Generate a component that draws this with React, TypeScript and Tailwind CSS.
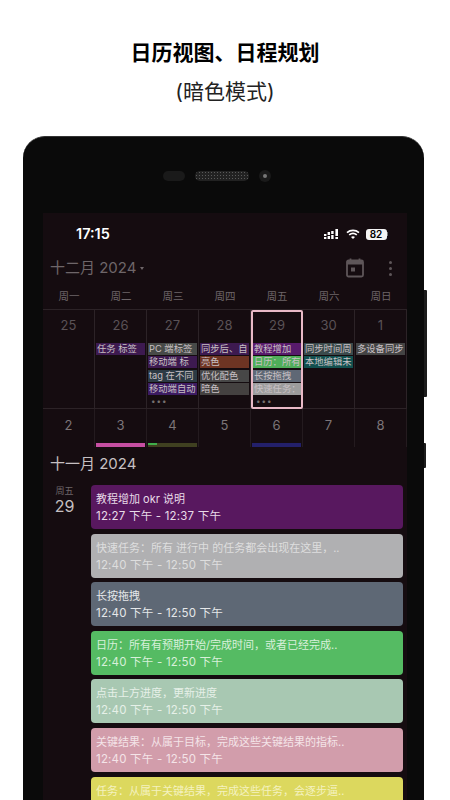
const font = { fontFamily: '"Inter", "Noto Sans CJK SC", sans-serif' };

const weekdays = ['周一', '周二', '周三', '周四', '周五', '周六', '周日'];

type Chip = { text: string; bg: string; color?: string };

const firstWeek: { day: string; chips: Chip[]; more?: boolean; today?: boolean }[] = [
  { day: '25', chips: [] },
  { day: '26', chips: [{ text: '任务 标签', bg: 'bg-[#3d1a50]' }] },
  {
    day: '27',
    more: true,
    chips: [
      { text: 'PC 端标签', bg: 'bg-[#474a48]' },
      { text: '移动端 标', bg: 'bg-[#3d1a50]' },
      { text: 'tag 在不同', bg: 'bg-[#2c3a44]' },
      { text: '移动端自动', bg: 'bg-[#3c1b62]' },
    ],
  },
  {
    day: '28',
    chips: [
      { text: '同步后、自', bg: 'bg-[#3d1a50]' },
      { text: '亮色', bg: 'bg-[#6e3423]' },
      { text: '优化配色', bg: 'bg-[#474747]' },
      { text: '暗色', bg: 'bg-[#444140]' },
    ],
  },
  {
    day: '29',
    more: true,
    today: true,
    chips: [
      { text: '教程增加', bg: 'bg-[#581a6c]' },
      { text: '日历：所有', bg: 'bg-[#4fae5a]' },
      { text: '长按拖拽', bg: 'bg-[#5f6875]' },
      { text: '快速任务：', bg: 'bg-[#9c9c9c]' },
    ],
  },
  {
    day: '30',
    chips: [
      { text: '同步时间周', bg: 'bg-[#3a4a4c]' },
      { text: '本地编辑未', bg: 'bg-[#12504f]' },
    ],
  },
  { day: '1', chips: [{ text: '多设备同步', bg: 'bg-[#444444]' }] },
];

const secondWeek: { day: string; bar?: string; accent?: string }[] = [
  { day: '2' },
  { day: '3', bar: 'bg-[#c64fa2]' },
  { day: '4', bar: 'bg-[#3f4020]', accent: 'bg-[#3fae4a]' },
  { day: '5' },
  { day: '6', bar: 'bg-[#23206a]' },
  { day: '7' },
  { day: '8' },
];

const events = [
  { title: '教程增加 okr 说明', time: '12:27 下午 - 12:37 下午', bg: 'bg-[#58185f]', color: 'text-[#e8dce8]' },
  { title: '快速任务：所有 进行中 的任务都会出现在这里，..', time: '12:40 下午 - 12:50 下午', bg: 'bg-[#b0b0b2]', color: 'text-[#dedede]' },
  { title: '长按拖拽', time: '12:40 下午 - 12:50 下午', bg: 'bg-[#5e6875]', color: 'text-[#e6e8ea]' },
  { title: '日历：所有有预期开始/完成时间，或者已经完成..', time: '12:40 下午 - 12:50 下午', bg: 'bg-[#55bb63]', color: 'text-[#d8f0da]' },
  { title: '点击上方进度，更新进度', time: '12:40 下午 - 12:50 下午', bg: 'bg-[#a8c8b2]', color: 'text-[#e6f0e8]' },
  { title: '关键结果：从属于目标，完成这些关键结果的指标..', time: '12:40 下午 - 12:50 下午', bg: 'bg-[#d29dab]', color: 'text-[#f4e4e8]' },
  { title: '任务：从属于关键结果，完成这些任务，会逐步逼..', time: '12:40 下午 - 12:50 下午', bg: 'bg-[#dcd85e]', color: 'text-[#f4f2c0]' },
];

function SignalIcon() {
  return (
    <svg width="16" height="10" viewBox="0 0 16 10" fill="#fff">
      <rect x="0" y="5" width="2.4" height="2" />
      <rect x="0" y="8" width="2.4" height="2" />
      <rect x="3.6" y="3" width="2.4" height="3" />
      <rect x="3.6" y="7" width="2.4" height="3" />
      <rect x="7.2" y="2" width="2.4" height="3" />
      <rect x="7.2" y="6" width="2.4" height="4" />
      <rect x="11.4" y="0" width="2.6" height="7" />
      <rect x="11.4" y="8" width="2.6" height="2" />
    </svg>
  );
}

function WifiIcon() {
  return (
    <svg width="14" height="10" viewBox="0 0 14 10" fill="none" stroke="#fff" strokeWidth="1.7">
      <path d="M1 3.6C4.4.6 9.6.6 13 3.6" />
      <path d="M3.2 5.9c2.2-1.9 5.4-1.9 7.6 0" />
      <path d="M7 10 5 7.9c1.1-1 2.9-1 4 0Z" fill="#fff" stroke="none" />
    </svg>
  );
}

function CalendarIcon() {
  return (
    <svg width="18" height="20" viewBox="0 0 18 20" fill="none">
      <path d="M4.5 0.5v3M13.5 0.5v3" stroke="#5e5659" strokeWidth="1.8" />
      <rect x="1" y="2.5" width="16" height="16" rx="1.5" stroke="#5e5659" strokeWidth="1.8" />
      <rect x="1" y="2.5" width="16" height="4" fill="#5e5659" />
      <rect x="5" y="9.5" width="4" height="4" fill="#5e5659" />
    </svg>
  );
}

export default function App() {
  return (
    <div className="w-[450px] h-[800px] overflow-hidden bg-white flex flex-col items-start" style={font}>
      <div className="w-full pt-[38px] flex flex-col items-center text-black">
        <h1 className="text-[21px] leading-[30px] font-bold">日历视图、日程规划</h1>
        <p className="mt-[9px] text-[21px] leading-[30px] text-[#222]">(暗色模式)</p>
      </div>

      <div className="relative ml-[23px] mt-[29px] w-[401px] h-[700px] shrink-0 rounded-t-[22px] bg-[#0a0a0a] border-t border-[#333] pl-[20px] pr-[17px]">
        <div className="absolute right-[-3px] top-[153px] w-[3px] h-[107px] bg-[#1c1c1c] rounded-r-[1px]" />
        <div className="absolute right-[-2px] top-[306px] w-[2px] h-[25px] bg-[#1c1c1c] rounded-r-[1px]" />

        <div className="h-[76px] flex items-start justify-center pt-[34px] pr-[17px]">
          <div className="w-[22px] h-[10px] rounded-full bg-[#1a1a1a]" />
          <div
            className="ml-[10px] w-[54px] h-[10px] rounded-full bg-[#222] bg-[radial-gradient(#5a5a5a_0.7px,transparent_0.8px)] bg-[length:3px_3px]"
          />
          <div className="ml-[10px] w-[12px] h-[12px] -mt-[1px] rounded-full bg-[#1a1a1a] flex items-center justify-center">
            <div className="w-[4px] h-[4px] rounded-full bg-[#777]" />
          </div>
        </div>

        <div className="w-[364px] h-[625px] bg-[#150c10] overflow-hidden">
          {/* status bar */}
          <div className="h-[40px] pt-[2px] pl-[33px] pr-[19px] flex items-center justify-between">
            <span className="text-white text-[14.5px] font-semibold leading-[20px]">17:15</span>
            <div className="flex items-center gap-[6px]">
              <SignalIcon />
              <WifiIcon />
              <div className="flex items-center">
                <div className="w-[21px] h-[11px] rounded-[3px] bg-[#f4f4f4] text-black text-[10px] leading-[11px] font-semibold text-center">82</div>
                <div className="w-[1.5px] h-[4px] bg-[#777]" />
              </div>
            </div>
          </div>

          {/* month header */}
          <div className="h-[32px] -mt-[1px] pl-[7px] pr-[15px] flex items-center justify-between">
            <div className="flex items-center text-[#6e6669] text-[15px] leading-[20px]">
              十二月 2024
              <div className="ml-[4px] w-0 h-0 border-x-[2.5px] border-x-transparent border-t-[3px] border-t-[#6e6669]" />
            </div>
            <div className="flex items-center gap-[25px]">
              <CalendarIcon />
              <div className="flex flex-col gap-[3px]">
                <div className="w-[3px] h-[3px] rounded-full bg-[#5e5659]" />
                <div className="w-[3px] h-[3px] rounded-full bg-[#5e5659]" />
                <div className="w-[3px] h-[3px] rounded-full bg-[#5e5659]" />
              </div>
            </div>
          </div>

          {/* weekdays */}
          <div className="grid grid-cols-7 h-[25px] items-center">
            {weekdays.map((d) => (
              <div key={d} className="text-center text-[10.5px] text-[#6e6669] leading-[14px]">{d}</div>
            ))}
          </div>

          {/* first week */}
          <div className="grid grid-cols-7 h-[99px] border-t border-[#2c2327]">
            {firstWeek.map((c) => (
              <div
                key={c.day}
                className={c.today ? 'border-2 border-[#e8b9c6] rounded-[2px] min-w-0' : 'border-r border-[#2c2327] px-[1px] min-w-0'}
              >
                <div className={`text-center text-[13px] leading-[18px] text-[#5a5256] ${c.today ? 'pt-[4px]' : 'pt-[6px]'}`}>{c.day}</div>
                <div className="mt-[9px] flex flex-col gap-[1.3px]">
                  {c.chips.map((chip) => (
                    <div key={chip.text} className={`h-[12px] ${chip.bg} px-[1px] text-[9.3px] leading-[12px] text-[#c8c0c4] whitespace-nowrap overflow-hidden`}>
                      {chip.text}
                    </div>
                  ))}
                </div>
                {c.more && <div className="pl-[3px] text-[#77716f] text-[8px] leading-[12px] tracking-[1px]">•••</div>}
              </div>
            ))}
          </div>

          {/* second week, cut off by the agenda */}
          <div className="grid grid-cols-7 h-[39px] overflow-hidden border-t border-[#2c2327]">
            {secondWeek.map((c) => (
              <div key={c.day} className="border-r border-[#241b1f] px-[1px] min-w-0">
                <div className="text-center text-[13px] leading-[18px] text-[#7c7578] pt-[7px]">{c.day}</div>
                {c.bar && (
                  <div className={`mt-[9px] h-[6px] ${c.bar}`}>
                    {c.accent && <div className={`w-[9px] h-[2px] ${c.accent}`} />}
                  </div>
                )}
              </div>
            ))}
          </div>

          {/* agenda */}
          <div className="pl-[7px] pt-[7px] h-[38px] text-[15px] leading-[20px] text-[#c6c0c2]">十一月 2024</div>
          <div className="flex items-start">
            <div className="w-[43px] mr-[5px] shrink-0 flex flex-col items-center">
              <span className="text-[9px] leading-[12px] text-[#6e6669]">周五</span>
              <span className="text-[16px] leading-[19px] text-[#c6c0c2]">29</span>
            </div>
            <div className="flex-1 flex flex-col gap-[4.6px] pr-[4px]">
              {events.map((e) => (
                <div key={e.title} className={`h-[44px] shrink-0 rounded-[4px] ${e.bg} ${e.color} px-[5px] pt-[6px] text-[11px] leading-[17px] whitespace-nowrap overflow-hidden`}>
                  <div>{e.title}</div>
                  <div className="text-[11.5px] tracking-[0.2px]">{e.time}</div>
                </div>
              ))}
            </div>
          </div>
        </div>
      </div>
    </div>
  );
}
